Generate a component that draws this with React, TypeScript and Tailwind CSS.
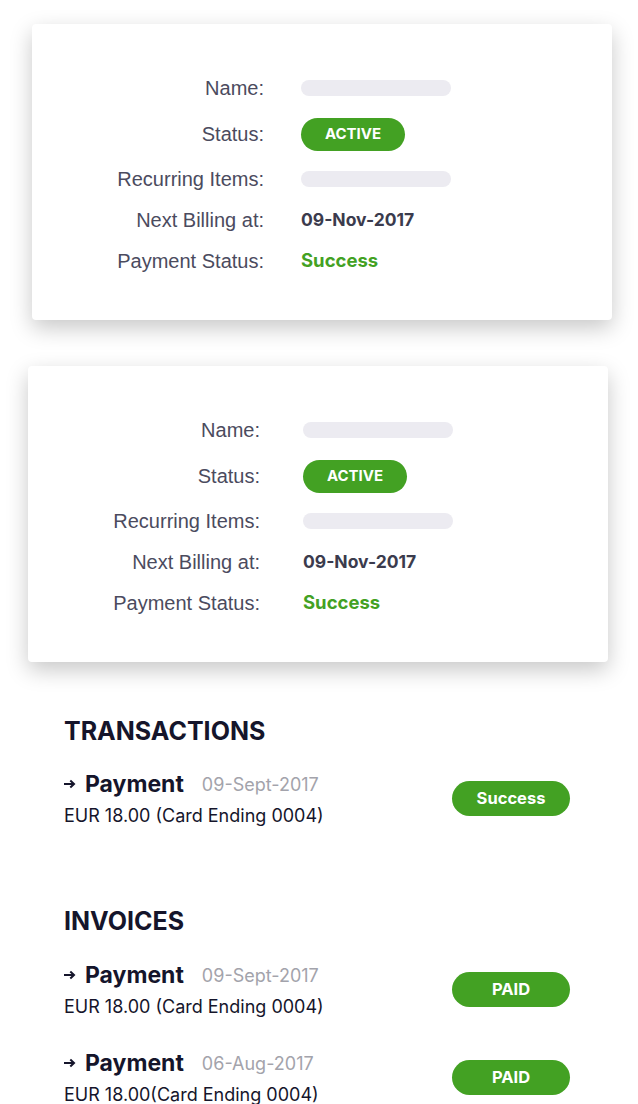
const Arrow = () => (
  <svg width="12" height="10" viewBox="0 0 12 10" className="mr-[9px]">
    <path d="M0 5h9M6.3 1.6L10 5l-3.7 3.4" stroke="#15152b" strokeWidth="2" fill="none" />
  </svg>
);

const Row = ({ label, h, children }: { label: string; h: string; children: React.ReactNode }) => (
  <div className={`flex items-center ${h}`}>
    <div className="w-[232px] text-right text-[20px] text-[#4b4b5e] font-['Liberation_Sans',sans-serif]">{label}</div>
    {children}
  </div>
);

const Card = ({ gap }: { gap: string }) => (
  <div className="h-[296px] w-[580px] rounded-[4px] bg-white pt-[44px] shadow-[0_8px_22px_rgba(0,0,0,0.22)]">
    <Row label="Name:" h="h-[40px]">
      <div className={`${gap} h-[16px] w-[150px] rounded-full bg-[#ecebf1]`} />
    </Row>
    <Row label="Status:" h="h-[52px]">
      <div className={`${gap} flex h-[33px] w-[104px] items-center justify-center rounded-full bg-[#43a123] text-[15px] font-bold text-white`}>
        ACTIVE
      </div>
    </Row>
    <Row label="Recurring Items:" h="h-[38px]">
      <div className={`${gap} h-[16px] w-[150px] rounded-full bg-[#ecebf1]`} />
    </Row>
    <Row label="Next Billing at:" h="h-[44px]">
      <div className={`${gap} text-[17.5px] font-bold text-[#3b3b4d]`}>09-Nov-2017</div>
    </Row>
    <Row label="Payment Status:" h="h-[38px]">
      <div className={`${gap} text-[18.5px] font-bold text-[#43a123]`}>Success</div>
    </Row>
  </div>
);

const Item = ({ date, pill, sp }: { date: string; pill: string; sp: string }) => (
  <div className="flex items-center justify-between pr-[68px]">
    <div>
      <div className="flex h-[30px] items-center">
        <Arrow />
        <span className="text-[23px] font-bold text-[#15152b]">Payment</span>
        <span className="ml-[18px] text-[18px] text-[#a3a3ab]">{date}</span>
      </div>
      <div className="mt-[6px] text-[18px] leading-[22px] text-[#15152b]">
        EUR 18.00{sp}(Card Ending 0004)
      </div>
    </div>
    <div className="flex h-[35px] w-[118px] items-center justify-center rounded-full bg-[#43a123] text-[16.5px] font-bold text-white">
      {pill}
    </div>
  </div>
);

export default function App() {
  return (
    <div className="min-h-[1104px] w-[638px] bg-white pt-[24px] font-['Inter',sans-serif]">
      <div className="ml-[32px]">
        <Card gap="ml-[37px]" />
      </div>
      <div className="ml-[28px] mt-[46px]">
        <Card gap="ml-[43px]" />
      </div>
      <div className="pl-[64px] pt-[53px]">
        <h2 className="text-[25px] font-bold leading-[32px] text-[#15152b]">TRANSACTIONS</h2>
        <div className="mt-[22px]">
          <Item date="09-Sept-2017" pill="Success" sp=" " />
        </div>
        <h2 className="mt-[78px] text-[25px] font-bold leading-[32px] text-[#15152b]">INVOICES</h2>
        <div className="mt-[23px]">
          <Item date="09-Sept-2017" pill="PAID" sp=" " />
        </div>
        <div className="mt-[30px]">
          <Item date="06-Aug-2017" pill="PAID" sp="" />
        </div>
      </div>
    </div>
  );
}
